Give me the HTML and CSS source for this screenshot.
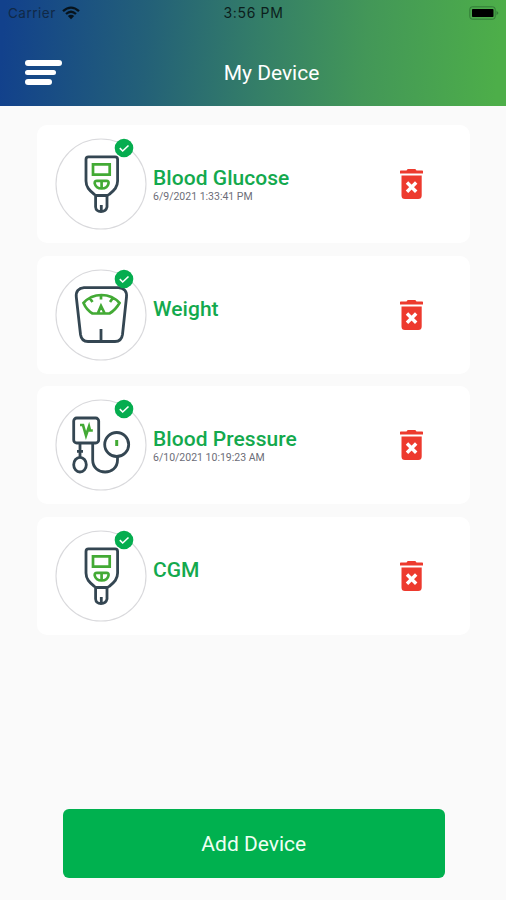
FILE: index.html
```html
<!DOCTYPE html>
<html lang="en">
<head>
<meta charset="utf-8">
<title>My Device</title>
<link rel="stylesheet" href="styles.css">
</head>
<body>
<svg class="defs" aria-hidden="true">
  <symbol id="meter" viewBox="0 0 92 92">
    <circle class="ring" cx="46" cy="46" r="45"/>
    <g class="dark">
      <path d="M33.500 18.800H60Q62.600 18.800 62.600 21.500V43C62.600 50 58 53 54 56.500Q52.800 57.500 51 57.500H42.500Q40.700 57.500 39.500 56.500C35.500 53 31 50 31 43V21.500Q31 18.800 33.500 18.800Z"/>
      <path d="M40.600 58V69Q41 73.500 46 73.500T52 69V58M46.300 67V72"/>
    </g>
    <g class="green">
      <path d="M38 26.300H54.700V36.700H38Z"/>
      <path d="M42 42.800H51.500Q54 42.800 53.500 45.500Q52.500 50.500 46.700 50.500T39.700 45.500Q39.500 42.800 42 42.800ZM46.600 43V50"/>
    </g>
  </symbol>
  <symbol id="scale" viewBox="0 0 92 92">
    <circle class="ring" cx="46" cy="46" r="45"/>
    <g class="dark">
      <path d="M29 18.700H63.500Q72.300 19.500 71.500 28L67.500 65.500Q66.500 72.500 60 72.500H33Q26.500 72.500 25.500 65.500L21.300 28Q20.500 19.500 29 18.700ZM46 60V72"/>
    </g>
    <path class="green" d="M28.500 34C38 23.300 55 23.300 64.500 34Q60.500 41 54.500 44.500H37.500Q31.500 41 28.500 34ZM46 26V30.500M35 29.500L37.500 33M57.500 29.500L55 33M43 44L46 37L49.500 44"/>
  </symbol>
  <symbol id="pressure" viewBox="0 0 92 92">
    <circle class="ring" cx="46" cy="46" r="45"/>
    <g class="dark">
      <rect x="18.700" y="19" width="25" height="25" rx="3"/>
      <path d="M25 44V58M22 52.300H28M37.700 44V61C37.700 77 62.500 77 62.500 61V58"/>
      <ellipse cx="25" cy="65.700" rx="6.300" ry="7.300"/>
      <circle cx="61.700" cy="45.500" r="12"/>
    </g>
    <path class="green" d="M25 26H28L31 36.500L34 27.500L35 31.500H37.800"/>
    <path class="green bar" d="M61.700 41V47"/>
  </symbol>
  <symbol id="check" viewBox="0 0 20 20">
    <circle cx="10" cy="10" r="9.300" fill="#05ad4f"/>
    <path d="M5.800 10.200L8.700 13L14.500 7.500" fill="none" stroke="#fff" stroke-width="1.600"/>
  </symbol>
  <symbol id="trash" viewBox="0 0 24 32">
    <path fill="#ed3a2e" d="M0 3.200Q0 2.500 .7 2.500H6.500L7.700 1H15.300L16.500 2.500H22.300Q23 2.500 23 3.200V5.500H0ZM1.500 7.500H21.700V27.500Q21.700 31 18.200 31H5Q1.500 31 1.500 27.500Z"/>
    <path d="M7 14.500L16.200 23.700M16.200 14.500L7 23.700" stroke="#fff" stroke-width="3.400"/>
  </symbol>
</svg>

<header class="header">
  <div class="status">
    <div class="carrier">Carrier
      <svg class="wifi" viewBox="0 0 18 14"><path d="M1 5.200Q9-2 17 5.200M4 8Q9 3.600 14 8" fill="none" stroke="#07131c" stroke-width="2.300"/><path d="M5.800 10Q9 7.300 12.200 10L9 13.300Z" fill="#07131c"/></svg>
    </div>
    <time class="clock">3:56 PM</time>
    <svg class="battery" viewBox="0 0 30 14"><rect x=".8" y=".8" width="25.400" height="12.400" rx="2.500" fill="none" stroke="#327b37"/><rect x="3" y="3" width="21.500" height="8" rx=".8"/><path d="M27.500 4.500L29.500 7L27.500 9.500Z" fill="#327b37"/></svg>
  </div>
  <div class="nav">
    <div class="menu"><span></span><span></span><span></span></div>
    <h1>My Device</h1>
  </div>
</header>

<main class="list">
  <article class="card">
    <div class="device"><svg class="picture"><use href="#meter"/></svg><svg class="badge"><use href="#check"/></svg></div>
    <div class="info"><h2>Blood Glucose</h2><p>6/9/2021 1:33:41 PM</p></div>
    <svg class="trash"><use href="#trash"/></svg>
  </article>
  <article class="card">
    <div class="device"><svg class="picture"><use href="#scale"/></svg><svg class="badge"><use href="#check"/></svg></div>
    <div class="info"><h2>Weight</h2></div>
    <svg class="trash"><use href="#trash"/></svg>
  </article>
  <article class="card">
    <div class="device"><svg class="picture"><use href="#pressure"/></svg><svg class="badge"><use href="#check"/></svg></div>
    <div class="info"><h2>Blood Pressure</h2><p>6/10/2021 10:19:23 AM</p></div>
    <svg class="trash"><use href="#trash"/></svg>
  </article>
  <article class="card">
    <div class="device"><svg class="picture"><use href="#meter"/></svg><svg class="badge"><use href="#check"/></svg></div>
    <div class="info"><h2>CGM</h2></div>
    <svg class="trash"><use href="#trash"/></svg>
  </article>
</main>

<button class="add">Add Device</button>
</body>
</html>
```
FILE: styles.css
```css
* { box-sizing: border-box; }

body {
  margin: 0;
  height: 900px;
  display: flex;
  flex-direction: column;
  background: #fafafa;
  font-family: Roboto, "Liberation Sans", sans-serif;
  overflow: hidden;
}

h1, h2, p { margin: 0; }
svg { display: block; flex: none; }
.defs { width: 0; height: 0; position: absolute; }

.header {
  height: 105.500px;
  flex: none;
  background: linear-gradient(94deg, #12418c 1%, #236078 29%, #347e68 51%, #439758 72%, #4dae49 98%);
}

.status {
  height: 26px;
  padding: 0 7px 0 8px;
  display: grid;
  grid-template-columns: 1fr auto 1fr;
  align-items: center;
  color: #07131c;
  font: 13.500px/26px Inter, sans-serif;
}

.carrier {
  display: flex;
  align-items: center;
  gap: 6px;
  color: #102947;
  letter-spacing: .5px;
}

.wifi { width: 18px; height: 14px; }
.clock { color: #0c1e1c; font-size: 14px; font-weight: 400; letter-spacing: .65px; }
.battery { width: 30px; height: 14px; justify-self: end; }

.nav {
  height: 79px;
  padding: 0 25px;
  display: grid;
  grid-template-columns: 1fr auto 1fr;
  align-items: center;
}

.nav h1 {
  grid-column: 2;
  padding: 15px 0 0 37px;
  color: #fff;
  font-size: 21px;
  line-height: 24px;
  font-weight: 400;
}

.menu { display: grid; gap: 4.200px; padding-top: 14px; }
.menu span { height: 5.500px; width: 37px; border-radius: 3px; background: #fff; }
.menu span:nth-child(2) { width: 31px; }
.menu span:nth-child(3) { width: 27px; }

.list {
  padding: 19.500px 36px 0 37px;
  display: grid;
  gap: 12.500px;
}

.card {
  height: 118px;
  padding: 0 46.500px 0 18px;
  display: flex;
  align-items: center;
  background: #fff;
  border-radius: 10px;
}

.device { position: relative; width: 92px; height: 92px; }
.picture { width: 92px; height: 92px; }
.badge { position: absolute; left: 59px; top: 0; width: 20px; height: 20px; }

.ring { fill: none; stroke: #d9d9dc; stroke-width: 1.100; }
.dark { fill: none; stroke: #344652; stroke-width: 2.800; }
.green { fill: none; stroke: #43aa35; stroke-width: 2.700; }
.bar { stroke-width: 3; }

.info { flex: 1; align-self: flex-start; padding: 41.400px 0 0 6px; }

.info h2 {
  color: #13a94d;
  font-size: 21px;
  line-height: 24px;
  font-weight: 500;
  letter-spacing: .05px;
}

.info p {
  padding-top: 1px;
  color: #6c6d78;
  font-size: 10.500px;
  line-height: 12px;
}

.trash { width: 24px; height: 32px; }

.add {
  width: 382.500px;
  height: 69px;
  margin: auto 0 22px 62.500px;
  border: 0;
  border-radius: 6px;
  background: #00b14f;
  color: #effff3;
  font: 400 21px/24px Roboto, sans-serif;
}
```
